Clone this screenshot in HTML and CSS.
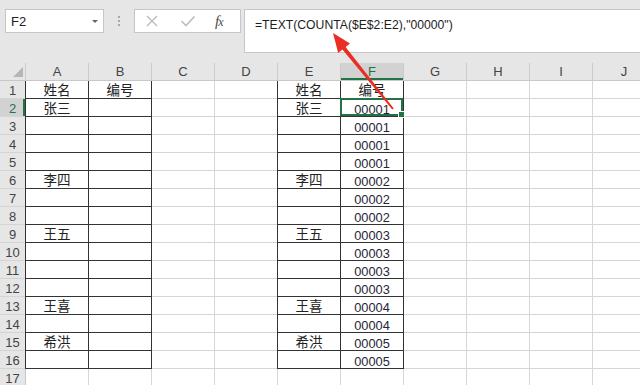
FILE: index.html
```html
<!DOCTYPE html>
<html>
<head lang="zh">
    <meta charset="UTF-8">
    <title>编号</title>
    <link rel="stylesheet" href="styles.css">
</head>
<body>

    <!-- 编辑栏 -->
    <div class="bar">
        <div class="namebox"><span>F2</span><i class="caret"></i></div>
        <div class="grip"><i></i><i></i><i></i></div>
        <div class="fxbox">
            <svg class="btn" width="14" height="14" viewBox="0 0 14 14"><path d="M2 2L12 12M12 2L2 12" stroke="#bdbdbd" stroke-width="1.4" fill="none"/></svg>
            <svg class="btn ok" width="16" height="12" viewBox="0 0 16 12"><path d="M1.5 6L6 10.5L14.5 1.5" stroke="#bdbdbd" stroke-width="1.6" fill="none"/></svg>
            <span class="fx"><i>f</i><i class="x">x</i></span>
        </div>
        <div class="formula">=TEXT(COUNTA($E$2:E2),"00000")</div>
    </div>

    <!-- 表格 -->
    <div class="sheet">
        <div class="row head">
            <div class="corner"><i class="tri"></i></div>
            <div>A</div><div>B</div><div>C</div><div>D</div><div>E</div>
            <div class="hl">F</div><div>G</div><div>H</div><div>I</div><div>J</div>
        </div>
        <div class="row"><div class="rh">1</div><div class="t l">姓名</div><div class="t">编号</div><div></div><div></div><div class="t l">姓名</div><div class="t">编号</div><div></div><div></div><div></div><div></div></div>
        <div class="row"><div class="rh hl">2</div><div class="t l">张三</div><div class="t"></div><div></div><div></div><div class="t l">张三</div><div class="t n sel">00001</div><div></div><div></div><div></div><div></div></div>
        <div class="row"><div class="rh">3</div><div class="t l"></div><div class="t"></div><div></div><div></div><div class="t l"></div><div class="t n">00001</div><div></div><div></div><div></div><div></div></div>
        <div class="row"><div class="rh">4</div><div class="t l"></div><div class="t"></div><div></div><div></div><div class="t l"></div><div class="t n">00001</div><div></div><div></div><div></div><div></div></div>
        <div class="row"><div class="rh">5</div><div class="t l"></div><div class="t"></div><div></div><div></div><div class="t l"></div><div class="t n">00001</div><div></div><div></div><div></div><div></div></div>
        <div class="row"><div class="rh">6</div><div class="t l">李四</div><div class="t"></div><div></div><div></div><div class="t l">李四</div><div class="t n">00002</div><div></div><div></div><div></div><div></div></div>
        <div class="row"><div class="rh">7</div><div class="t l"></div><div class="t"></div><div></div><div></div><div class="t l"></div><div class="t n">00002</div><div></div><div></div><div></div><div></div></div>
        <div class="row"><div class="rh">8</div><div class="t l"></div><div class="t"></div><div></div><div></div><div class="t l"></div><div class="t n">00002</div><div></div><div></div><div></div><div></div></div>
        <div class="row"><div class="rh">9</div><div class="t l">王五</div><div class="t"></div><div></div><div></div><div class="t l">王五</div><div class="t n">00003</div><div></div><div></div><div></div><div></div></div>
        <div class="row"><div class="rh">10</div><div class="t l"></div><div class="t"></div><div></div><div></div><div class="t l"></div><div class="t n">00003</div><div></div><div></div><div></div><div></div></div>
        <div class="row"><div class="rh">11</div><div class="t l"></div><div class="t"></div><div></div><div></div><div class="t l"></div><div class="t n">00003</div><div></div><div></div><div></div><div></div></div>
        <div class="row"><div class="rh">12</div><div class="t l"></div><div class="t"></div><div></div><div></div><div class="t l"></div><div class="t n">00003</div><div></div><div></div><div></div><div></div></div>
        <div class="row"><div class="rh">13</div><div class="t l">王喜</div><div class="t"></div><div></div><div></div><div class="t l">王喜</div><div class="t n">00004</div><div></div><div></div><div></div><div></div></div>
        <div class="row"><div class="rh">14</div><div class="t l"></div><div class="t"></div><div></div><div></div><div class="t l"></div><div class="t n">00004</div><div></div><div></div><div></div><div></div></div>
        <div class="row"><div class="rh">15</div><div class="t l">希洪</div><div class="t"></div><div></div><div></div><div class="t l">希洪</div><div class="t n">00005</div><div></div><div></div><div></div><div></div></div>
        <div class="row"><div class="rh">16</div><div class="t l"></div><div class="t"></div><div></div><div></div><div class="t l"></div><div class="t n">00005</div><div></div><div></div><div></div><div></div></div>
        <div class="row"><div class="rh">17</div><div></div><div></div><div></div><div></div><div></div><div></div><div></div><div></div><div></div><div></div></div>
    </div>

    <!-- 红色箭头 -->
    <svg class="arrow" width="640" height="385" viewBox="0 0 640 385">
        <polygon points="333,33 350,43.5 345.6,47 393.8,108.4 392.2,109.6 342.4,49.4 338.2,53" fill="#ea2e24"/>
    </svg>

</body>
</html>
```

FILE: styles.css
```css
*{
    margin: 0px;
    padding: 0px;
    box-sizing: border-box;
}

body{
    width: 640px;
    height: 385px;
    overflow: hidden;
    background: #fff;
    font-family: "Liberation Sans", "Noto Sans CJK SC", sans-serif;
    color: #222;
    position: relative;
}

/* 编辑栏 */
.bar{
    height: 63px;
    background: #e6e6e6;
    display: flex;
    align-items: flex-start;
    padding: 9px 0 0 5px;
}

.namebox{
    width: 99px;
    height: 24px;
    background: #fff;
    border: 1px solid #c6c6c6;
    display: flex;
    align-items: center;
    justify-content: space-between;
    padding: 0 5px 0 5px;
    font-size: 13px;
}

.caret{
    width: 0;
    height: 0;
    border-left: 3px solid transparent;
    border-right: 3px solid transparent;
    border-top: 3px solid #666;
}

.grip{
    width: 30px;
    height: 24px;
    display: flex;
    flex-direction: column;
    align-items: center;
    justify-content: center;
    gap: 2px;
}

.grip i{
    width: 2px;
    height: 2px;
    background: #a8a8a8;
}

.fxbox{
    width: 107px;
    height: 24px;
    background: #fff;
    border: 1px solid #c6c6c6;
    display: flex;
    align-items: center;
    padding: 0 0 0 10px;
}

.fxbox .ok{
    margin-left: 21px;
}

.fx{
    margin-left: 19px;
    font-family: "Liberation Serif", serif;
    font-size: 15px;
    color: #4a4a4a;
    letter-spacing: -1px;
}

.fx .x{
    font-size: 12px;
}

.formula{
    flex: 1;
    height: 44px;
    margin-left: 3px;
    background: #fff;
    border: 1px solid #c6c6c6;
    border-right: none;
    padding: 8px 0 0 10px;
    font-size: 12.2px;
    color: #1e1e1e;
}

/* 表格 */
.row{
    display: grid;
    grid-template-columns: 26px repeat(10, 63px);
    height: 18px;
}

.row > div{
    height: 18px;
    border-right: 1px solid #d6d6d6;
    border-bottom: 1px solid #d6d6d6;
    text-align: center;
    font-size: 13.5px;
    line-height: 17px;
    padding-top: 1px;
    white-space: nowrap;
}

.head > div{
    background: #e6e6e6;
    border-right: 1px solid #cbcbcb;
    border-bottom: 1px solid #c8c8c8;
    font-size: 13px;
    color: #444;
    padding-top: 0;
    line-height: 18px;
}

.head .corner{
    display: flex;
    align-items: flex-end;
    justify-content: flex-end;
    padding: 0 2px 3px 0;
}

.tri{
    width: 0;
    height: 0;
    border-left: 10px solid transparent;
    border-bottom: 10px solid #b6b6b6;
}

.row .rh{
    background: #e6e6e6;
    border-right: 1px solid #c8c8c8;
    border-bottom: 1px solid #d4d4d4;
    font-size: 13px;
    color: #444;
    padding-top: 1px;
}

.row .hl{
    background: #d2d2d2;
    color: #217346;
}

.head .hl{
    box-shadow: inset 0 -2px 0 #217346;
}

.row .rh.hl{
    box-shadow: inset -2px 0 0 #217346;
}

/* 加边框的单元格 */
.row .t{
    border-right-color: #333;
    border-bottom-color: #333;
}

.row .l{
    box-shadow: -1px 0 0 #333;
}

.row .n{
    font-size: 12.8px;
    padding-top: 2px;
    color: #262636;
}

/* 选中的单元格 */
.sel{
    position: relative;
}

.sel::after{
    content: '';
    position: absolute;
    left: -1px;
    top: -1px;
    right: 0;
    bottom: 0;
    border: 2px solid #217346;
}

.sel::before{
    content: '';
    position: absolute;
    right: -2px;
    bottom: -2px;
    width: 5px;
    height: 5px;
    background: #217346;
    border: 1px solid #fff;
    z-index: 1;
}

.arrow{
    position: absolute;
    left: 0;
    top: 0;
    pointer-events: none;
}
```
